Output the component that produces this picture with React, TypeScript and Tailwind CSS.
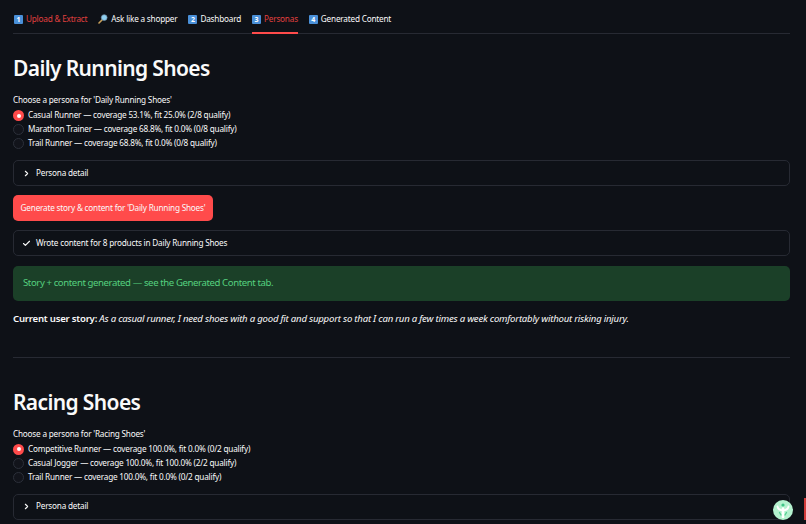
import React from "react";
import { Check, ChevronRight } from "lucide-react";

const tabs = [
  { key: "1", label: "Upload & Extract", active: false, red: true },
  { key: "search", label: "Ask like a shopper", active: false, red: false },
  { key: "2", label: "Dashboard", active: false, red: false },
  { key: "3", label: "Personas", active: true, red: true },
  { key: "4", label: "Generated Content", active: false, red: false },
];

function Keycap({ n }: { n: string }) {
  return (
    <span className="flex h-[9px] w-[9px] items-center justify-center rounded-[1px] bg-[#4a90d9] text-[7px] font-bold leading-none tracking-normal text-white">
      {n}
    </span>
  );
}

function Magnifier() {
  return (
    <svg width="10" height="10" viewBox="0 0 10 10">
      <path d="M4.2 5.8 L1 9" stroke="#c9a15a" strokeWidth="1.6" strokeLinecap="round" />
      <circle cx="6.2" cy="3.6" r="2.9" fill="#8fd0f0" stroke="#6f8ea8" strokeWidth="0.7" />
    </svg>
  );
}

function Radio({ on, label }: { on: boolean; label: string }) {
  return (
    <div className="flex h-[14px] items-center gap-[4px]">
      {on ? (
        <span className="flex h-[11px] w-[11px] items-center justify-center rounded-full bg-[#ff4b4b]">
          <span className="h-[4px] w-[4px] rounded-full bg-white" />
        </span>
      ) : (
        <span className="h-[11px] w-[11px] rounded-full border border-[#2c303a] bg-[#12141b]" />
      )}
      <span className="text-[8.2px] tracking-[-0.2px] text-[#fafafa]">{label}</span>
    </div>
  );
}

function Persona({ title, options }: { title: string; options: { on: boolean; label: string }[] }) {
  return (
    <>
      <h1 className="text-[21px] font-semibold leading-[32px] tracking-[-0.63px] text-[#fafafa]">{title}</h1>
      <p className="mt-[10px] text-[8.2px] leading-[12px] tracking-[-0.2px] text-[#fafafa]">Choose a persona for '{title}'</p>
      <div className="mt-[2.5px] flex flex-col">
        {options.map((o) => (
          <Radio key={o.label} on={o.on} label={o.label} />
        ))}
      </div>
    </>
  );
}

function Expander({ icon, label }: { icon: React.ReactNode; label: string }) {
  return (
    <div className="flex h-[26px] items-center gap-[5px] rounded-[5px] border border-[#272a33] pl-[8px]">
      {icon}
      <span className="text-[8.2px] tracking-[-0.2px] text-[#fafafa]">{label}</span>
    </div>
  );
}

export default function App() {
  return (
    <div
      className="relative h-[524px] w-[806px] overflow-hidden bg-[#0e1117] pl-[13px] pr-[16px] pt-[8px]"
      style={{ fontFamily: "'Noto Sans', sans-serif" }}
    >
      {/* tabs */}
      <div className="flex h-[26px] gap-[11px] border-b border-[#272a33] pl-[1px]">
        {tabs.map((t) => (
          <div
            key={t.key}
            className={`flex h-[26px] items-center gap-[3px] border-b-2 pb-[2px] text-[8.2px] tracking-[-0.2px] ${
              t.active ? "border-[#ff4b4b]" : "border-transparent"
            } ${t.red ? "text-[#e0403f]" : "text-[#fafafa]"}`}
          >
            {t.key === "search" ? <Magnifier /> : <Keycap n={t.key} />}
            <span>{t.label}</span>
          </div>
        ))}
      </div>

      <div className="mt-[18px]">
        <Persona
          title="Daily Running Shoes"
          options={[
            { on: true, label: "Casual Runner — coverage 53.1%, fit 25.0% (2/8 qualify)" },
            { on: false, label: "Marathon Trainer — coverage 68.8%, fit 0.0% (0/8 qualify)" },
            { on: false, label: "Trail Runner — coverage 68.8%, fit 0.0% (0/8 qualify)" },
          ]}
        />
      </div>

      <div className="mt-[9.5px]">
        <Expander icon={<ChevronRight size={9} strokeWidth={3} className="text-[#fafafa]" />} label="Persona detail" />
      </div>

      <button className="mt-[9px] flex h-[26px] w-[200px] items-center justify-center whitespace-nowrap rounded-[5px] bg-[#ff4b4b] text-[8.2px] tracking-[-0.2px] text-[#fafafa]">
        Generate story &amp; content for 'Daily Running Shoes'
      </button>

      <div className="mt-[9px]">
        <Expander icon={<Check size={9} strokeWidth={3} className="text-[#fafafa]" />} label="Wrote content for 8 products in Daily Running Shoes" />
      </div>

      <div className="mt-[10px] flex h-[35px] items-center rounded-[5px] bg-[#1b4028] pl-[10px] text-[9.6px] tracking-[-0.4px] text-[#55d07f]">
        Story + content generated — see the Generated Content tab.
      </div>

      <p className="mt-[11px] text-[9.6px] leading-[14px] tracking-[-0.22px] text-[#fafafa]">
        <strong className="font-semibold">Current user story:</strong>{" "}
        <em>As a casual runner, I need shoes with a good fit and support so that I can run a few times a week comfortably without risking injury.</em>
      </p>

      <hr className="mt-[31px] border-[#272a33]" />

      <div className="mt-[27.5px]">
        <Persona
          title="Racing Shoes"
          options={[
            { on: true, label: "Competitive Runner — coverage 100.0%, fit 0.0% (0/2 qualify)" },
            { on: false, label: "Casual Jogger — coverage 100.0%, fit 100.0% (2/2 qualify)" },
            { on: false, label: "Trail Runner — coverage 100.0%, fit 0.0% (0/2 qualify)" },
          ]}
        />
      </div>

      <div className="mt-[9.5px]">
        <Expander icon={<ChevronRight size={9} strokeWidth={3} className="text-[#fafafa]" />} label="Persona detail" />
      </div>

      {/* floating badge */}
      <div className="absolute left-[773px] top-[500px] flex h-[20px] w-[20px] items-center justify-center rounded-full bg-[#b4f2cf]">
        <svg width="16" height="16" viewBox="0 0 16 16" fill="none" strokeLinecap="round">
          <circle cx="8" cy="3" r="1.6" fill="#3fc587" />
          <path d="M8 6.5v8.5" stroke="#fff" strokeWidth="2.6" />
          <path d="M2.5 4.5c.5 3 2.5 3.8 5.5 3.8s5-.8 5.5-3.8" stroke="#fff" strokeWidth="1.8" />
          <path d="M4.5 10.5 6 13M11.5 10.5 10 13" stroke="#58cf95" strokeWidth="1.4" />
        </svg>
      </div>
      <div className="absolute left-[804px] top-[498px] h-[22px] w-[2px] bg-[#d23a3a]" />
    </div>
  );
}
